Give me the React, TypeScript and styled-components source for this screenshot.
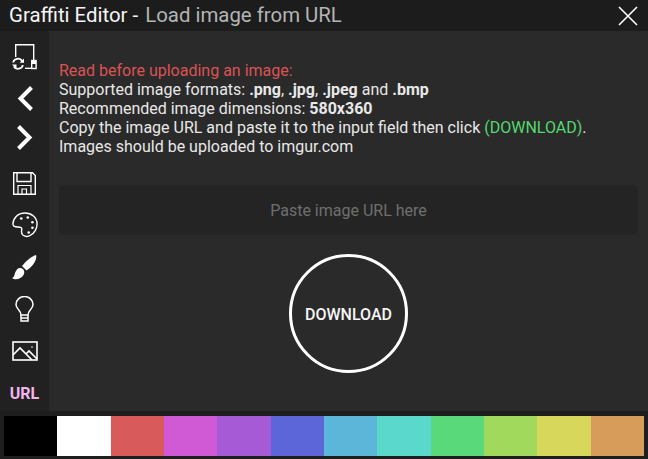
import React from "react";
import styled, { createGlobalStyle } from "styled-components";

const GlobalStyle = createGlobalStyle`
  html, body {
    margin: 0;
    padding: 0;
    background: #1e1e1e;
  }
  * {
    box-sizing: border-box;
  }
`;

const Window = styled.div`
  width: 648px;
  height: 459px;
  display: flex;
  flex-direction: column;
  background-color: #1e1e1e;
  font-family: Roboto, "Liberation Sans", sans-serif;
  color: #e8e8e8;
  overflow: hidden;
`;

const TitleBar = styled.div`
  height: 31px;
  flex: none;
  display: flex;
  align-items: center;
  justify-content: space-between;
  padding: 0 10px 0 9px;
  background-color: #1c1c1c;
`;

const Title = styled.div`
  font-size: 20.4px;
  line-height: 31px;
  color: #f5f5f5;
  white-space: nowrap;
`;

const SubTitle = styled.span`
  margin-left: 2px;
  color: #b4b4b4;
`;

const CloseButton = styled.div`
  width: 20px;
  height: 20px;
  display: flex;
`;

const Body = styled.div`
  height: 380px;
  flex: none;
  display: flex;
`;

const SideBar = styled.div`
  width: 49px;
  flex: none;
  display: flex;
  flex-direction: column;
  align-items: center;
  padding-top: 13px;
  background-color: #212121;
`;

const SideIcon = styled.div<{ $gap: number }>`
  margin-top: ${(p) => p.$gap}px;
  flex: none;
  display: flex;
  & svg {
    display: block;
  }
`;

const UrlLabel = styled.div`
  margin-top: 23px;
  font-size: 16px;
  line-height: 20px;
  font-weight: 700;
  color: #f2b5ee;
`;

const Content = styled.div`
  flex: 1;
  display: flex;
  flex-direction: column;
  padding: 30px 10px 0 10px;
  background-color: #2a2a2a;
`;

const Notes = styled.div`
  font-size: 16px;
  line-height: 19px;
  color: #e8e8e8;
  white-space: nowrap;
`;

const Warning = styled.div`
  color: #db5353;
`;

const Strong = styled.b`
  font-weight: 700;
`;

const Green = styled.span`
  color: #55d96f;
`;

const UrlField = styled.div`
  margin-top: 29px;
  height: 50px;
  display: flex;
  align-items: center;
  justify-content: center;
  border-radius: 5px;
  background-color: #242424;
  color: #6f6f6f;
  font-size: 16px;
`;

const DownloadRow = styled.div`
  margin-top: 19px;
  display: flex;
  justify-content: center;
`;

const DownloadButton = styled.div`
  width: 119px;
  height: 119px;
  display: flex;
  align-items: center;
  justify-content: center;
  padding-top: 2px;
  border: 3px solid #ffffff;
  border-radius: 50%;
  font-size: 16px;
  font-weight: 500;
  color: #f5f5f5;
`;

const Palette = styled.div`
  height: 48px;
  flex: none;
  display: flex;
  padding: 5px 4px 3px 4px;
  background-color: #1e1e1e;
`;

const Swatch = styled.div<{ $color: string }>`
  flex: 1;
  background-color: ${(p) => p.$color};
`;

const colors = [
  "#000000",
  "#ffffff",
  "#d85a5a",
  "#d05ad6",
  "#a75ad6",
  "#5c66d8",
  "#5cb6d9",
  "#5ad8cc",
  "#5ad97a",
  "#a0d95c",
  "#d7d75c",
  "#d89c5a",
];

const App = () => {
  return (
    <Window>
      <GlobalStyle />
      <TitleBar>
        <Title>
          Graffiti Editor - <SubTitle>Load image from URL</SubTitle>
        </Title>
        <CloseButton>
          <svg width="20" height="20" viewBox="0 0 20 20" fill="none" stroke="#fff" strokeWidth="1.6">
            <path d="M1 1 L19 19 M19 1 L1 19" />
          </svg>
        </CloseButton>
      </TitleBar>
      <Body>
        <SideBar>
          <SideIcon $gap={0}>
            <svg width="25" height="26" viewBox="0 0 25 26" fill="none" stroke="#fff" strokeWidth="1.4">
              <path d="M3.7 13 V0.7 H21.7 V16" />
              <path d="M13 24.3 H20" />
              <rect x="19.7" y="16.5" width="4.4" height="8" />
              <path d="M20 16.5 H24 V20 H20 Z" fill="#fff" stroke="none" />
              <path d="M1.2 18.5 a4.8 4.3 0 0 1 9 -1.5" strokeWidth="1.8" />
              <path d="M10.8 21 a4.8 4.3 0 0 1 -9 1.5" strokeWidth="1.8" />
              <path d="M7.5 18.8 H12 V14.5 Z M0 20.5 H4.5 V25 Z" fill="#fff" stroke="none" />
            </svg>
          </SideIcon>
          <SideIcon $gap={16}>
            <svg width="16" height="25" viewBox="0 0 16 25" fill="none" stroke="#fff" strokeWidth="4">
              <path d="M14.5 1.5 L3.5 12.5 L14.5 23.5" />
            </svg>
          </SideIcon>
          <SideIcon $gap={14}>
            <svg width="16" height="25" viewBox="0 0 16 25" fill="none" stroke="#fff" strokeWidth="4">
              <path d="M1.5 1.5 L12.5 12.5 L1.5 23.5" />
            </svg>
          </SideIcon>
          <SideIcon $gap={22}>
            <svg width="23" height="23" viewBox="0 0 23 23" fill="none" stroke="#fff" strokeWidth="1.4">
              <path d="M0.7 0.7 H19.5 L22.3 3.5 V22.3 H0.7 Z" />
              <path d="M4 0.7 V9.5 H18 V0.7" />
              <path d="M5 22.3 V13.5 H18 V22.3" strokeWidth="1.2" />
              <path d="M9 22.3 V17 H13.5 V22.3" strokeWidth="1.2" />
            </svg>
          </SideIcon>
          <SideIcon $gap={17}>
            <svg width="26" height="26" viewBox="0 0 28 28" fill="none" stroke="#fff" strokeWidth="1.5">
              <path d="M14 1 C6 1 1 7 1 13 C1 18 8 15 10 17 C12 19 8 22 12 25 C15 27 17 27 20 25 C24 23 27 18 27 13 C27 6 21 1 14 1 Z" />
              <circle cx="10" cy="7" r="1.4" fill="#fff" stroke="none" />
              <circle cx="17" cy="6" r="1.4" fill="#fff" stroke="none" />
              <circle cx="22" cy="11" r="1.4" fill="#fff" stroke="none" />
              <circle cx="22" cy="17" r="1.4" fill="#fff" stroke="none" />
              <circle cx="18" cy="22" r="1.4" fill="#fff" stroke="none" />
            </svg>
          </SideIcon>
          <SideIcon $gap={17}>
            <svg width="25" height="25" viewBox="0 0 25 25" fill="#fff">
              <path d="M24 0 C25.5 4 21 11.5 14.5 15.5 L10 11 C14 6 20 1 24 0 Z" />
              <path d="M8 13 C11.5 13 13.5 16.5 11.5 20 C9.5 24 3 25.5 0 23 C3 22 2 19 4 16 C5 14 6 13 8 13 Z" />
            </svg>
          </SideIcon>
          <SideIcon $gap={16}>
            <svg width="19" height="26" viewBox="0 0 19 26" fill="none" stroke="#fff" strokeWidth="1.5">
              <path d="M6 19 C6 14 1 13 1 8.5 A8.5 8 0 0 1 18 8.5 C18 13 13 14 13 19 Z" />
              <path d="M6 19 V25 H13 V19 M6 22 H13" />
            </svg>
          </SideIcon>
          <SideIcon $gap={19}>
            <svg width="26" height="20" viewBox="0 0 26 20" fill="none" stroke="#fff" strokeWidth="1.6">
              <rect x="1" y="1" width="24" height="18" />
              <path d="M1 14 L8 7 L20 19 M14 13 L17 10 L25 18" />
              <circle cx="20" cy="6" r="0.8" fill="#fff" stroke="none" />
            </svg>
          </SideIcon>
          <UrlLabel>URL</UrlLabel>
        </SideBar>
        <Content>
          <Notes>
            <Warning>Read before uploading an image:</Warning>
            <div>
              Supported image formats: <Strong>.png</Strong>, <Strong>.jpg</Strong>, <Strong>.jpeg</Strong> and{" "}
              <Strong>.bmp</Strong>
            </div>
            <div>
              Recommended image dimensions: <Strong>580x360</Strong>
            </div>
            <div>
              Copy the image URL and paste it to the input field then click <Green>(DOWNLOAD)</Green>.
            </div>
            <div>Images should be uploaded to imgur.com</div>
          </Notes>
          <UrlField>Paste image URL here</UrlField>
          <DownloadRow>
            <DownloadButton>DOWNLOAD</DownloadButton>
          </DownloadRow>
        </Content>
      </Body>
      <Palette>
        {colors.map((c) => (
          <Swatch key={c} $color={c} />
        ))}
      </Palette>
    </Window>
  );
};

export default App;
